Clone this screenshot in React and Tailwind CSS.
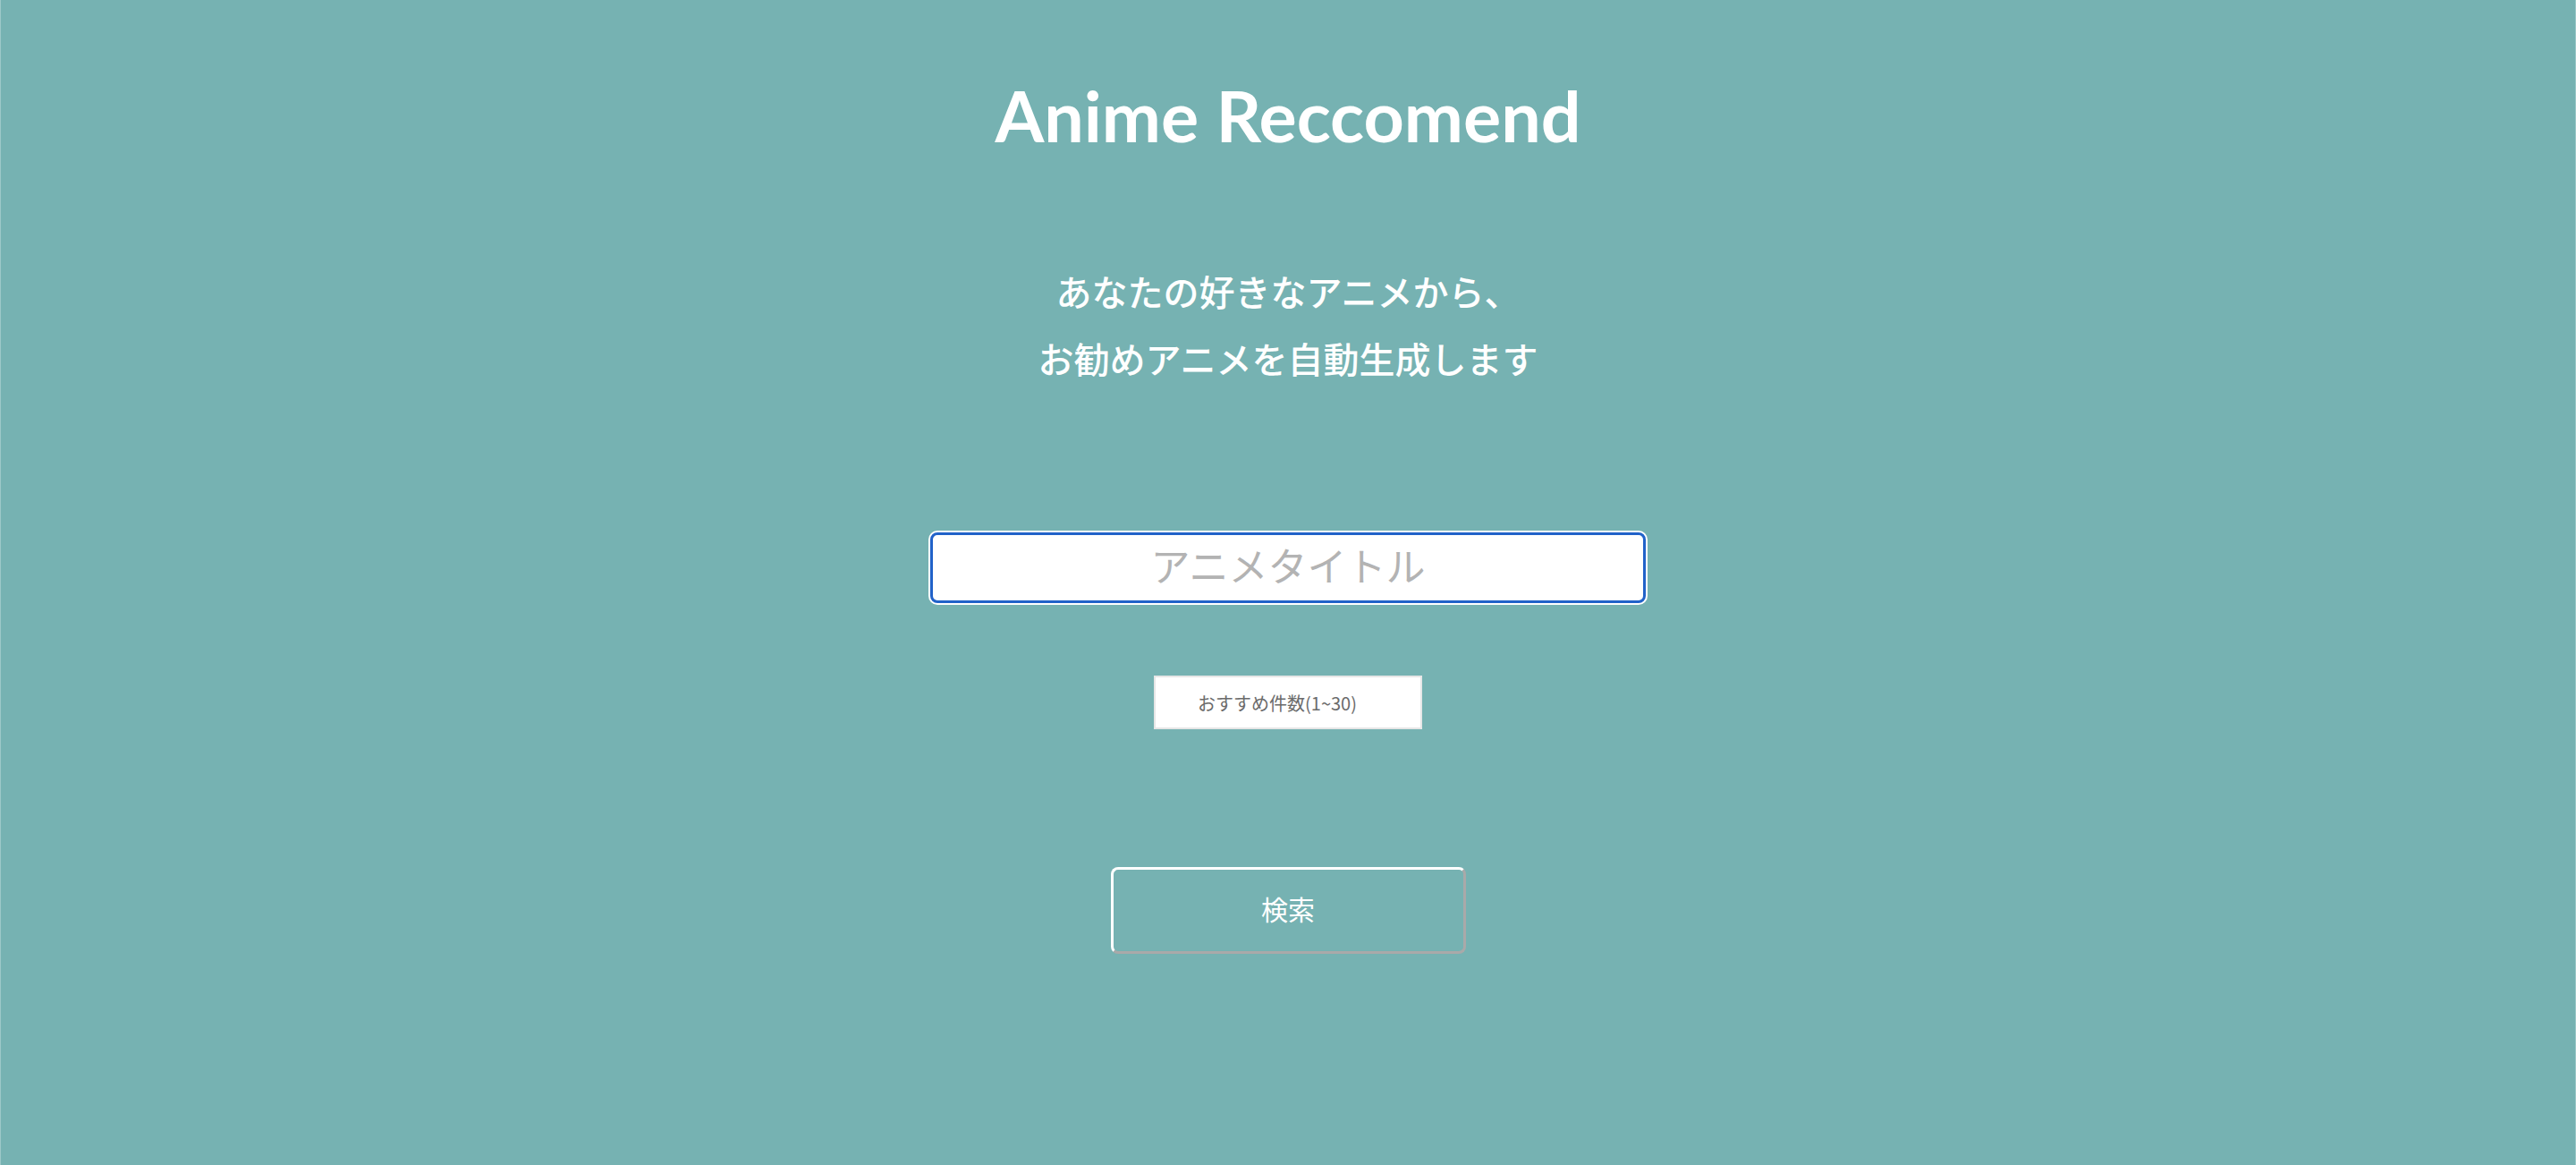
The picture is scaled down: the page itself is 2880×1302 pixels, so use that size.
import React, { useState } from 'react'

function App() {
  const [title, setTitle] = useState("")
  const [count, setCount] = useState("")

  return (
    <div className="min-h-screen w-full bg-[#76b2b2] border-x border-[#9cc8c8] flex flex-col items-center" style={{ fontFamily: '"Noto Sans CJK JP", "Noto Sans", sans-serif' }}>
      <h1 className="mt-[79px] h-[100px] text-[79px] leading-[100px] font-bold text-white" style={{ fontFamily: 'Lato, "Noto Sans", sans-serif' }}>
        Anime Reccomend
      </h1>

      <div className="mt-[109px] text-center text-white text-[40px] leading-[75px] font-medium">
        <p>あなたの好きなアニメから、</p>
        <p>お勧めアニメを自動生成します</p>
      </div>

      <input
        type="text"
        value={title}
        onChange={(e) => setTitle(e.target.value)}
        placeholder="アニメタイトル"
        className="mt-[157px] w-[800px] h-[79px] pb-[8px] bg-white rounded-lg border-[3px] border-[#2162c9] ring-2 ring-white outline-none text-center text-[44px] text-gray-700 placeholder:text-[#b3b3b3]"
      />

      <input
        type="text"
        value={count}
        onChange={(e) => setCount(e.target.value)}
        placeholder="おすすめ件数(1~30)"
        className="mt-[81px] w-[300px] h-[60px] bg-white border-2 border-[#e6e6e6] outline-none text-center pr-6 text-[20px] text-gray-700 placeholder:text-[#6b6b6b]"
      />

      <button className="mt-[154px] w-[397px] h-[97px] pb-[4px] rounded-lg border-[3px] border-t-white border-l-white border-r-[#a9a9a9] border-b-[#a9a9a9] bg-transparent text-white text-[30px]">
        検索
      </button>
    </div>
  )
}

export default App
